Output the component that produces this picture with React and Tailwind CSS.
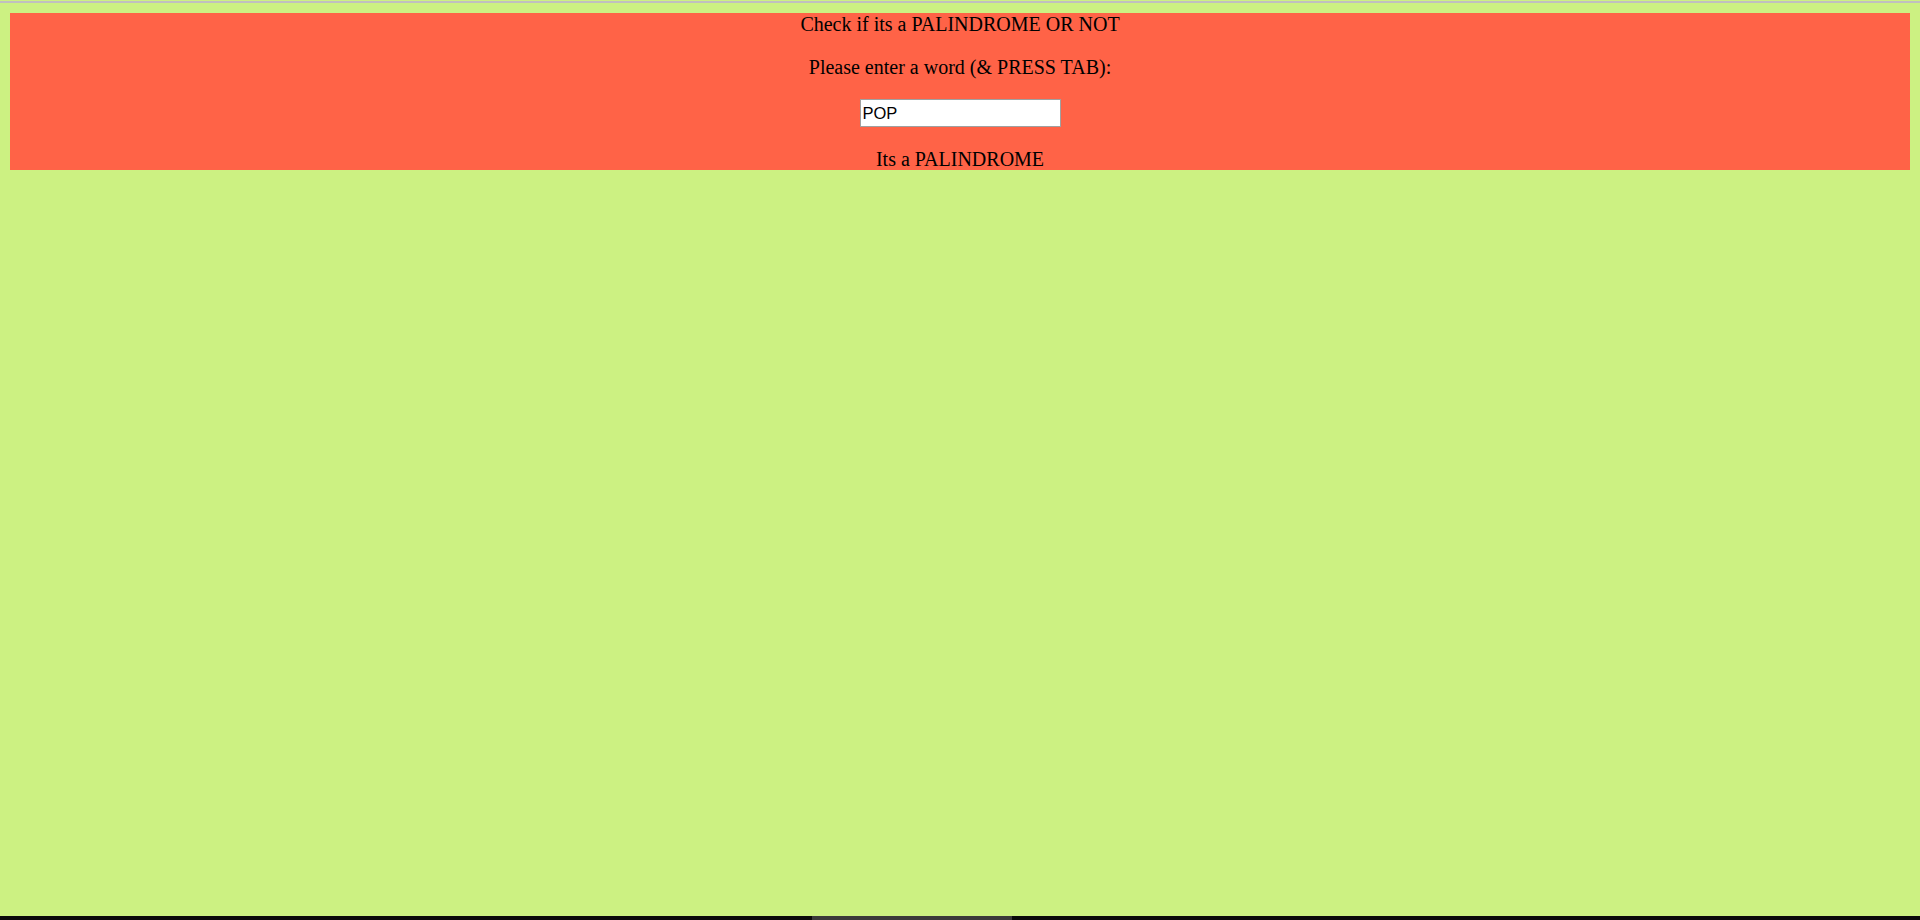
import React, { useState } from 'react';

const App = () => {
  const [word, setWord] = useState('POP');
  const [result, setResult] = useState('Its a PALINDROME');

  const check = () => {
    const w = word.toLowerCase();
    setResult(w === w.split('').reverse().join('') ? 'Its a PALINDROME' : 'Its NOT a PALINDROME');
  };

  return (
    <div className="h-[920px] bg-[#ccf182] flex flex-col overflow-hidden">
      <div className="mt-[1px] h-[2px] bg-[#c0c0c0]" />
      <div className="mx-[10px] mt-[10px] h-[157px] bg-[#ff6347] text-center text-black text-[20px] leading-[23px] font-['Liberation_Serif',serif]">
        <div>Check if its a PALINDROME OR NOT</div>
        <p className="mt-[20px]">Please enter a word (&amp; PRESS TAB):</p>
        <div className="mt-[20px] flex justify-center">
          <input
            type="text"
            value={word}
            onChange={(e) => setWord(e.target.value)}
            onBlur={check}
            className="w-[201px] h-[28px] bg-white border border-[#a0a0a0] px-[2px] text-[16.5px] text-black outline-none font-['Liberation_Sans',Arial,sans-serif]"
          />
        </div>
        <p className="mt-[21px]">{result}</p>
      </div>
      <div className="flex-1" />
      <div className="h-[4px] bg-[#0a0a0a] flex">
        <div className="w-[812px]" />
        <div className="w-[200px] bg-[#3a3a3a]" />
      </div>
    </div>
  );
};

export default App;
